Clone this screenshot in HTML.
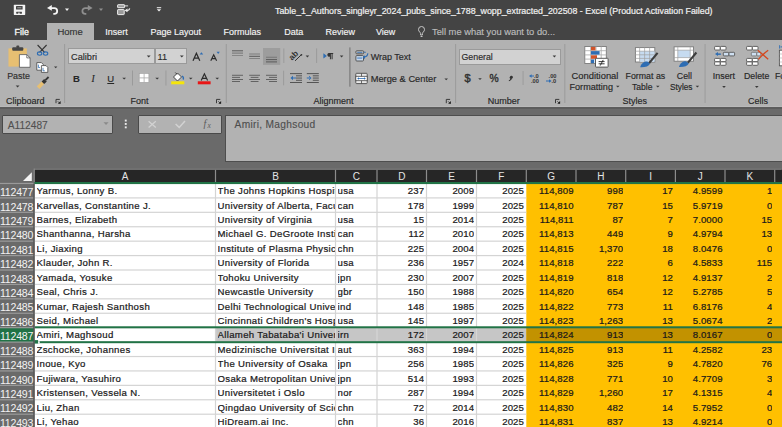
<!DOCTYPE html>
<html><head><meta charset="utf-8">
<style>
*{margin:0;padding:0;box-sizing:border-box}
html,body{width:782px;height:427px;overflow:hidden;background:#6a6a6a;font-family:"Liberation Sans",sans-serif}
.c{position:absolute;height:14.42px;line-height:14.42px;font-size:9.6px;letter-spacing:0.34px;color:#1a1a1a;-webkit-text-stroke:0.22px #1a1a1a;white-space:nowrap;overflow:hidden}
.r{text-align:right;letter-spacing:0.08px}
.rh{position:absolute;left:0;width:34.0px;height:14.42px;line-height:14.42px;font-size:10.6px;letter-spacing:-0.25px;color:#f2f2f2;text-align:right;padding-right:1.2px;white-space:nowrap;overflow:hidden}
.ch{position:absolute;height:12.300000000000011px;line-height:14.700000000000012px;font-size:10px;color:#e4e4e4;text-align:center}
.t{position:absolute;white-space:nowrap;-webkit-text-stroke-width:0.15px}
</style></head><body>
<!-- title + tabs -->
<div style="position:absolute;left:0;top:0;width:782px;height:40px;background:#444"></div>
<div class="t" style="left:275px;top:4.6px;font-size:8.85px;line-height:12px;color:#f0f0f0;-webkit-text-stroke:0.2px #f0f0f0">Table_1_Authors_singleyr_2024_pubs_since_1788_wopp_extracted_202508 - Excel (Product Activation Failed)</div>
<!-- QAT icons -->
<svg style="position:absolute;left:0;top:0" width="170" height="22">
 <rect x="13.8" y="4.8" width="11.4" height="10.1" rx="0.6" fill="#f4f4f4"/>
 <rect x="16" y="6.1" width="6.6" height="3.3" rx="0.5" fill="#454545"/>
 <rect x="17.3" y="7.2" width="4" height="1.1" fill="#9a9a9a"/>
 <rect x="16.2" y="11.8" width="5.8" height="1.9" rx="0.4" fill="#454545"/>
 <rect x="18.2" y="12.6" width="1.5" height="1.3" fill="#f4f4f4"/>
 <polygon points="47,7.9 51.8,5 51.8,10.8" fill="#f4f4f4"/>
 <path d="M50.5 8.1 H54.3 A2.9 2.9 0 0 1 57.2 11 A2.9 2.9 0 0 1 54.3 13.9 H53.3" fill="none" stroke="#f4f4f4" stroke-width="1.8"/>
 <polygon points="65,8.6 69,8.6 67,11" fill="#f4f4f4"/>
 <polygon points="92.6,7.9 87.8,5 87.8,10.8" fill="#8f8f8f"/>
 <path d="M89.1 8.1 H85.3 A2.9 2.9 0 0 0 82.4 11 A2.9 2.9 0 0 0 85.3 13.9 H86.3" fill="none" stroke="#8f8f8f" stroke-width="1.8"/>
 <polygon points="99,8.6 103,8.6 101,11" fill="#8f8f8f"/>
 <rect x="117.6" y="4.7" width="7" height="3" rx="0.5" fill="#9a9a9a" stroke="#eeeeee" stroke-width="1"/>
 <path d="M124.6 5.9 h3.5" stroke="#e0e0e0" stroke-width="1"/>
 <rect x="117.6" y="9.6" width="6.6" height="5" rx="0.5" fill="#9a9a9a" stroke="#eeeeee" stroke-width="1"/>
 <polygon points="124.6,10.5 127.5,8.6 127.5,12.2" fill="#f4f4f4"/>
 <path d="M126.5 10.6 c1.6 0 2.8 -0.8 3.2 -2.3" fill="none" stroke="#e8e8e8" stroke-width="1.2"/>
 <rect x="156.8" y="7.2" width="4.4" height="1" fill="#f0f0f0"/>
 <polygon points="156.8,9.2 161.2,9.2 159,11.6" fill="#f0f0f0"/>
</svg>
<!-- tabs -->
<div style="position:absolute;left:47.2px;top:23px;width:46.8px;height:17px;background:#b2b2b2"></div>
<div class="t" style="left:14.6px;top:26px;font-size:8.8px;line-height:12px;color:#f4f4f4;-webkit-text-stroke:0.35px #f4f4f4">File</div>
<div class="t" style="left:57.4px;top:26px;font-size:9.5px;line-height:12px;color:#333">Home</div>
<div class="t" style="left:105.2px;top:26px;font-size:9px;line-height:12px;color:#f4f4f4">Insert</div>
<div class="t" style="left:150.5px;top:26px;font-size:9px;line-height:12px;color:#f4f4f4">Page Layout</div>
<div class="t" style="left:223.6px;top:26px;font-size:9px;line-height:12px;color:#f4f4f4">Formulas</div>
<div class="t" style="left:284.3px;top:26px;font-size:9px;line-height:12px;color:#f4f4f4">Data</div>
<div class="t" style="left:325.5px;top:26px;font-size:9px;line-height:12px;color:#f4f4f4">Review</div>
<div class="t" style="left:376px;top:26px;font-size:9px;line-height:12px;color:#f4f4f4">View</div>
<svg style="position:absolute;left:416px;top:25px" width="12" height="14"><g fill="none" stroke="#c8c8c8" stroke-width="1"><path d="M4.6 10 v-1.5 c0 -1 -2.1 -2 -2.1 -4 a3 3 0 0 1 6 0 c0 2 -2.1 3 -2.1 4 V10 z"/><path d="M4.6 11.5 h1.9"/></g></svg>
<div class="t" style="left:432px;top:26px;font-size:9.35px;line-height:12px;color:#bdbdbd">Tell me what you want to do...</div>

<!-- ribbon body -->
<div style="position:absolute;left:0;top:40px;width:782px;height:66px;background:#b2b2b2"></div>
<div style="position:absolute;left:0;top:106px;width:782px;height:1px;background:#b9b9b9"></div>
<div style="position:absolute;left:0;top:107px;width:782px;height:2px;background:#5c5c5c"></div>
<!-- ribbon texts -->
<div class="t" style="left:7.2px;top:70px;font-size:8.9px;line-height:12px;color:#2e2e2e">Paste</div>
<div class="t" style="left:5.9px;top:94.6px;font-size:9px;line-height:12px;color:#262626">Clipboard</div>
<div class="t" style="left:130.5px;top:94.6px;font-size:9px;line-height:12px;color:#262626">Font</div>
<div class="t" style="left:313.6px;top:94.6px;font-size:9px;line-height:12px;color:#262626">Alignment</div>
<div class="t" style="left:487.7px;top:94.6px;font-size:9px;line-height:12px;color:#262626">Number</div>
<div class="t" style="left:622.5px;top:94.6px;font-size:9px;line-height:12px;color:#262626">Styles</div>
<div class="t" style="left:748px;top:94.6px;font-size:9px;line-height:12px;color:#262626">Cells</div>
<!-- font boxes -->
<div style="position:absolute;left:68.3px;top:48.3px;width:86.3px;height:16.2px;background:#d2d2d2;border:1px solid #9a9a9a"></div>
<div style="position:absolute;left:154.6px;top:48.3px;width:32.7px;height:16.2px;background:#d2d2d2;border:1px solid #9a9a9a"></div>
<div class="t" style="left:71px;top:50.5px;font-size:9.2px;line-height:12px;color:#2a2a2a">Calibri</div>
<div class="t" style="left:157.5px;top:50.5px;font-size:9.2px;line-height:12px;color:#2a2a2a">11</div>
<div class="t" style="left:73px;top:72.5px;font-size:9.5px;line-height:12px;color:#262626;font-weight:bold">B</div>
<div class="t" style="left:91.5px;top:72.5px;font-size:9.5px;line-height:12px;color:#262626;font-style:italic;font-family:'Liberation Serif',serif">I</div>
<div class="t" style="left:107.3px;top:72.5px;font-size:9.5px;line-height:12px;color:#262626;text-decoration:underline">U</div>
<!-- alignment texts -->
<div class="t" style="left:370.7px;top:50.5px;font-size:9px;line-height:12px;color:#262626">Wrap Text</div>
<div class="t" style="left:370.7px;top:73.3px;font-size:9.3px;line-height:12px;color:#262626">Merge &amp; Center</div>
<!-- number -->
<div style="position:absolute;left:459px;top:48.5px;width:101.7px;height:16.1px;background:#d2d2d2;border:1px solid #9a9a9a"></div>
<div class="t" style="left:461.5px;top:50.5px;font-size:8.8px;line-height:12px;color:#2a2a2a">General</div>
<div class="t" style="left:464.6px;top:72.2px;font-size:11px;line-height:13px;color:#333;-webkit-text-stroke:0.45px #333">$</div>
<div class="t" style="left:489.5px;top:73.3px;font-size:10.3px;line-height:12px;color:#333;-webkit-text-stroke:0.4px #333">%</div>

<!-- styles -->
<div class="t" style="left:571.5px;top:69.8px;font-size:9.4px;line-height:12px;color:#262626">Conditional</div>
<div class="t" style="left:569.5px;top:80.5px;font-size:9.1px;line-height:12px;color:#262626">Formatting</div>
<div class="t" style="left:625.6px;top:69.8px;font-size:8.8px;line-height:12px;color:#262626">Format as</div>
<div class="t" style="left:632px;top:80.5px;font-size:8.6px;line-height:12px;color:#262626">Table</div>
<div class="t" style="left:676.8px;top:69.8px;font-size:8.8px;line-height:12px;color:#262626">Cell</div>
<div class="t" style="left:669.9px;top:80.5px;font-size:8.3px;line-height:12px;color:#262626">Styles</div>
<div class="t" style="left:712.8px;top:69.8px;font-size:8.9px;line-height:12px;color:#262626">Insert</div>
<div class="t" style="left:744px;top:69.8px;font-size:8.8px;line-height:12px;color:#262626">Delete</div>
<div class="t" style="left:775px;top:69.8px;font-size:8.8px;line-height:12px;color:#262626">Format</div>
<!-- ribbon icons svg -->
<svg style="position:absolute;left:0;top:0" width="782" height="110">
 <!-- separators -->
 <g fill="#989898">
  <rect x="64.2" y="44" width="0.9" height="59"/>
  <rect x="225.8" y="44" width="0.9" height="59"/>
  <rect x="455.2" y="44" width="0.9" height="59"/>
  <rect x="564.4" y="44" width="0.9" height="59"/>
  <rect x="704.6" y="44" width="0.9" height="59"/>
  <rect x="132" y="70.5" width="0.9" height="15"/>
  <rect x="165.5" y="70.5" width="0.9" height="15"/>
  <rect x="283.4" y="48.4" width="0.9" height="14.6"/>
  <rect x="316.2" y="48.4" width="0.9" height="14.6"/>
  <rect x="283.2" y="70.7" width="0.9" height="14.6"/>
  <rect x="522.6" y="71" width="0.9" height="14"/>
 </g>
 <rect x="349.3" y="47.4" width="1.2" height="39.3" fill="#7a7a7a"/>
 <!-- dropdown arrows -->
 <g fill="#3a3a3a">
  <polygon points="15.7,85.6 19.5,85.6 17.6,87.6"/>
  <polygon points="54,66.4 57.4,66.4 55.7,68.3"/>
  <polygon points="146.8,55.6 150.6,55.6 148.7,57.6"/>
  <polygon points="179.9,55.6 183.7,55.6 181.8,57.6"/>
  <polygon points="122.3,77.7 126,77.7 124.15,79.6"/>
  <polygon points="155.3,77.7 159,77.7 157.15,79.6"/>
  <polygon points="188.9,77.7 192.6,77.7 190.75,79.6"/>
  <polygon points="215.4,77.7 219.1,77.7 217.25,79.6"/>
  <polygon points="305.6,55.6 309.2,55.6 307.4,57.5"/>
  <polygon points="339.8,55.6 343.4,55.6 341.6,57.5"/>
  <polygon points="444.4,78.4 448,78.4 446.2,80.3"/>
  <polygon points="552.6,55.6 556.2,55.6 554.4,57.5"/>
  <polygon points="478.2,78.2 481.8,78.2 480,80.1"/>
  <polygon points="616,85.7 619.6,85.7 617.8,87.6"/>
  <polygon points="656,85.7 659.6,85.7 657.8,87.6"/>
  <polygon points="695.6,85.7 699.2,85.7 697.4,87.6"/>
  <polygon points="722.2,86 725.8,86 724,87.9"/>
  <polygon points="755,86 758.6,86 756.8,87.9"/>
 </g>
 <!-- launchers -->
 <path d="M56.0 103.2 v-3.8 h3.8" fill="none" stroke="#3a3a3a" stroke-width="1"/><path d="M57.8 101.3 l2.2 2.2" stroke="#3a3a3a" stroke-width="0.8"/><polygon points="60.6,101.0 60.6,103.8 57.8,103.8" fill="#1e1e1e"/>
 <path d="M216.5 103.2 v-3.8 h3.8" fill="none" stroke="#3a3a3a" stroke-width="1"/><path d="M218.3 101.3 l2.2 2.2" stroke="#3a3a3a" stroke-width="0.8"/><polygon points="221.1,101.0 221.1,103.8 218.3,103.8" fill="#1e1e1e"/>
 <path d="M446.3 103.2 v-3.8 h3.8" fill="none" stroke="#3a3a3a" stroke-width="1"/><path d="M448.1 101.3 l2.2 2.2" stroke="#3a3a3a" stroke-width="0.8"/><polygon points="450.90000000000003,101.0 450.90000000000003,103.8 448.1,103.8" fill="#1e1e1e"/>
 <path d="M555.5 103.2 v-3.8 h3.8" fill="none" stroke="#3a3a3a" stroke-width="1"/><path d="M557.3 101.3 l2.2 2.2" stroke="#3a3a3a" stroke-width="0.8"/><polygon points="560.1,101.0 560.1,103.8 557.3,103.8" fill="#1e1e1e"/>
 <!-- paste -->
 <rect x="8.45" y="48.4" width="18.4" height="18.2" fill="#e7bf72"/>
 <rect x="12.2" y="47.2" width="11.1" height="3.6" rx="1" fill="#454545"/>
 <rect x="16.3" y="45.6" width="3" height="2.5" rx="1" fill="#454545"/>
 <path d="M19.4 54.6 h7.4 l3.3 3.3 v9.4 h-10.7 z" fill="#fff" stroke="#555" stroke-width="0.8"/>
 <path d="M26.8 54.6 v3.3 h3.3" fill="none" stroke="#555" stroke-width="0.8"/>
 <!-- scissors -->
 <path d="M37.6 45 L44.6 52.4 M46.6 45 L39.6 52.4" stroke="#333" stroke-width="1.1" fill="none"/>
 <ellipse cx="39.6" cy="53.6" rx="2.2" ry="1.7" fill="none" stroke="#2e6db3" stroke-width="1.1"/>
 <ellipse cx="45.6" cy="53.6" rx="2.2" ry="1.7" fill="none" stroke="#2e6db3" stroke-width="1.1"/>
 <!-- copy -->
 <path d="M36.8 62.6 h4.6 l1.8 1.8 v5.8 h-6.4 z" fill="#fff" stroke="#444" stroke-width="0.8"/>
 <path d="M41.4 65.6 h4.6 l1.8 1.8 v5 h-6.4 z" fill="#fff" stroke="#444" stroke-width="0.8"/>
 <path d="M38.4 64.6 v3 h1.6" stroke="#2e6db3" stroke-width="0.8" fill="none"/>
 <path d="M43 67.8 v3 h1.8" stroke="#2e6db3" stroke-width="0.8" fill="none"/>
 <!-- format painter -->
 <polygon points="36.8,86.3 41.6,81.5 44.2,84.1 39.4,88.9" fill="#e7bf72"/>
 <polygon points="41.6,81.5 44.2,78.9 46.8,81.5 44.2,84.1" fill="#333"/>
 <path d="M45.4 80.2 L48.6 77" stroke="#333" stroke-width="1.8"/>
 <!-- A grow/shrink -->
 <path d="M193 60.7 L196.4 53.2 L199.8 60.7 M194.3 58.1 H198.5" fill="none" stroke="#2b2b2b" stroke-width="1.25"/>
 <polygon points="199.6,54.6 203.2,54.6 201.4,52.2" fill="#2e6db3"/>
 <path d="M210.8 60.7 L213.7 54.8 L216.6 60.7 M211.9 58.6 H215.5" fill="none" stroke="#2b2b2b" stroke-width="1.15"/>
 <polygon points="216.6,51.8 219.8,51.8 218.2,54" fill="#2e6db3"/>
 <path d="M201.2 80.5 L204.4 73.8 L207.6 80.5 M202.4 78.3 H206.4" fill="none" stroke="#2b2b2b" stroke-width="1.2"/>
 <!-- borders -->
 <rect x="139.2" y="73.4" width="9.7" height="9" fill="#fff" stroke="#9a9a9a" stroke-width="0.6"/>
 <rect x="143.7" y="73.4" width="0.8" height="9" fill="#aaa"/>
 <rect x="139.2" y="77.5" width="9.7" height="0.8" fill="#aaa"/>
 <!-- fill color -->
 <path d="M173.5 77 l4 -4 l4 4 l-4 4 z" fill="#fff" stroke="#333" stroke-width="0.9"/>
 <path d="M175.3 72.5 l1.8 1.8" stroke="#333" stroke-width="0.9"/>
 <path d="M182 76.2 c1.5 0.6 1.8 2.2 1 3.3" fill="none" stroke="#2e6db3" stroke-width="1.4"/>
 <rect x="171.2" y="81.3" width="13.1" height="3" fill="#f5e50a"/>
 <rect x="197.8" y="81.3" width="12.8" height="3" fill="#e81515"/>
 <!-- align top/mid/bottom -->
 <rect x="263" y="48" width="17.2" height="16.9" fill="#9d9d9d"/>
 <g fill="#5a5a5a">
  <rect x="232" y="50.3" width="11" height="1"/><rect x="232" y="52.6" width="11" height="1" opacity="0.7"/><rect x="232" y="55" width="11" height="0.9" opacity="0.55"/>
  <rect x="249.2" y="53.5" width="10.8" height="1" opacity="0.6"/><rect x="249.2" y="55.8" width="10.8" height="1"/><rect x="249.2" y="58" width="10.8" height="0.9" opacity="0.6"/>
  <rect x="266" y="56.8" width="11" height="0.9" opacity="0.6"/><rect x="266" y="59.1" width="11" height="1"/><rect x="266" y="61.4" width="11" height="1"/>
 </g>
 <!-- orientation -->
 <text x="288.6" y="58.6" font-size="8.2" font-weight="bold" font-family="Liberation Sans" fill="#333" transform="rotate(-45 293 55.5)" style="-webkit-text-stroke:0.2px #333">ab</text>
 <path d="M295 60.9 l6.2 -6" stroke="#333" stroke-width="1"/>
 <circle cx="301.4" cy="54.8" r="0.9" fill="#333"/>
 <!-- rtl -->
 <polygon points="323.4,53.3 323.4,58.6 326.9,55.95" fill="#2e6db3"/>
 <path d="M328.5 53.1 h4.7 v0.9 h-0.6 v5.2 h-1 v-5.2 h-0.7 v5.2 h-1 v-2.6 a1.8 1.8 0 0 1 -1.4 -3.5 z" fill="#333"/>
 <!-- left/center/right -->
 <g fill="#5a5a5a">
  <rect x="232" y="74.8" width="11" height="0.9"/><rect x="232" y="76.9" width="8" height="0.9"/><rect x="232" y="79" width="11" height="0.9"/><rect x="232" y="81.1" width="8" height="0.9"/>
  <rect x="249.2" y="74.8" width="10.8" height="0.9"/><rect x="250.7" y="76.9" width="7.8" height="0.9"/><rect x="249.2" y="79" width="10.8" height="0.9"/><rect x="250.7" y="81.1" width="7.8" height="0.9"/>
  <rect x="266" y="74.8" width="11" height="0.9"/><rect x="269" y="76.9" width="8" height="0.9"/><rect x="266" y="79" width="11" height="0.9"/><rect x="269" y="81.1" width="8" height="0.9"/>
 </g>
 <!-- indents -->
 <g fill="#4a4a4a">
  <rect x="290" y="73.2" width="12" height="0.9"/><rect x="296" y="75.4" width="6" height="0.9"/><rect x="296" y="77.6" width="6" height="0.9"/><rect x="296" y="79.8" width="6" height="0.9"/><rect x="290" y="82" width="12" height="0.9"/>
  <rect x="306.8" y="73.2" width="12" height="0.9"/><rect x="312.8" y="75.4" width="6" height="0.9"/><rect x="312.8" y="77.6" width="6" height="0.9"/><rect x="312.8" y="79.8" width="6" height="0.9"/><rect x="306.8" y="82" width="12" height="0.9"/>
 </g>
 <path d="M290.5 78 l2.5 -2.2 v4.4 z M292.5 77.5 h3.5 v1 h-3.5z" fill="#2e6db3"/>
 <path d="M311.5 78 l-2.5 -2.2 v4.4 z M306.8 77.5 h3 v1 h-3z" fill="#2e6db3"/>
 <!-- wrap text icon -->
 <rect x="355.9" y="50.8" width="7.8" height="3" rx="0.9" fill="#c8c8c8" stroke="#4a4a4a" stroke-width="0.9"/>
 <rect x="357.2" y="51.9" width="5.2" height="0.8" fill="#2e6db3"/>
 <path d="M363.7 52.3 h2.2" stroke="#2e6db3" stroke-width="0.8"/>
 <rect x="355.9" y="55.6" width="7.6" height="5.4" rx="0.9" fill="#c8d8ea" stroke="#4a4a4a" stroke-width="0.9"/>
 <rect x="357.2" y="57.6" width="5" height="0.9" fill="#2e6db3"/>
 <path d="M367.8 53.3 c0 2.4 -1.6 3.7 -4.3 3.9" fill="none" stroke="#2e6db3" stroke-width="1.1"/>
 <polygon points="362.6,57.2 365,55.3 365,59" fill="#2e6db3"/>
 <!-- merge icon -->
 <rect x="355.8" y="73.3" width="11.4" height="10.3" rx="0.8" fill="#e8e8e8" stroke="#4a4a4a" stroke-width="0.9"/>
 <rect x="355.8" y="76.3" width="11.4" height="4.4" fill="#fff" stroke="#4a4a4a" stroke-width="0.8"/>
 <rect x="361.1" y="73.3" width="0.8" height="3" fill="#4a4a4a"/><rect x="361.1" y="80.7" width="0.8" height="2.9" fill="#4a4a4a"/>
 <path d="M357.8 78.5 h7.4" stroke="#2e6db3" stroke-width="0.8" fill="none"/>
 <polygon points="357.3,78.5 359,77.3 359,79.7" fill="#2e6db3"/><polygon points="365.7,78.5 364,77.3 364,79.7" fill="#2e6db3"/>
 <path d="M510.1 76.5 a1.5 1.5 0 1 1 1.8 2.1 c-0.3 1.3 -1.3 2.1 -2.9 2.6 l-0.3 -0.7 c1 -0.4 1.5 -1 1.6 -1.7 a1.5 1.5 0 0 1 -0.2 -2.3 z" fill="#333"/>
 <!-- decimal icons -->
 <g font-family="Liberation Sans" font-size="5.7" font-weight="bold" fill="#333">
 <text x="534" y="78">.0</text>
 <text x="531" y="82.8">.00</text>
 <text x="548.6" y="78">.00</text>
 <text x="551.4" y="82.8">.0</text>
 </g>
 <polygon points="529,76 531.6,74.3 531.6,77.7" fill="#2e6db3"/><rect x="531" y="75.5" width="3" height="1" fill="#2e6db3"/>
 <polygon points="551.6,81 549,79.3 549,82.7" fill="#2e6db3"/><rect x="546" y="80.5" width="3.2" height="1" fill="#2e6db3"/>
 <!-- conditional formatting icon -->
 <g>
  <rect x="584.8" y="46.5" width="21.5" height="17" fill="#fff" stroke="#7a7a7a" stroke-width="0.9"/>
  <path d="M584.8 50.7 h21.5 M584.8 54.9 h21.5 M584.8 59.1 h21.5 M590.6 46.5 v17 M596 46.5 v17 M601.2 46.5 v17" stroke="#a8a8a8" stroke-width="0.8"/>
  <rect x="591" y="46.9" width="4.5" height="3.5" fill="#d2542a"/>
  <rect x="591" y="51.1" width="8.6" height="3.5" fill="#2e6db3"/>
  <rect x="591" y="55.3" width="6" height="3.5" fill="#d2542a"/>
  <rect x="591" y="59.5" width="3.2" height="3.6" fill="#2e6db3"/>
  <rect x="595.5" y="58.3" width="12.6" height="8.8" rx="0.6" fill="#fff" stroke="#4a4a4a" stroke-width="0.9"/>
  <path d="M598.6 61.6 h6 M598.6 63.8 h6 M603.2 59.9 l-3 5.7" stroke="#222" stroke-width="0.9"/>
 </g>
 <!-- format as table -->
 <g>
  <rect x="635.4" y="47.6" width="19.4" height="14.4" fill="#fff" stroke="#7a7a7a" stroke-width="0.9"/>
  <rect x="639.6" y="51.2" width="15" height="10.6" fill="#c6dbf0"/>
  <path d="M635.4 51.2 h19.4 M635.4 54.8 h19.4 M635.4 58.4 h19.4 M639.6 47.6 v14.4 M644.6 47.6 v14.4 M649.6 47.6 v14.4" stroke="#a0a0a0" stroke-width="0.7"/>
  <path d="M648.2 62.6 l8.6 -10.4 l1.6 1.4 l-8.6 10.4 z" fill="#3d3d3d"/>
  <path d="M640.2 67.2 c0.8 -3.4 3.6 -6 7.2 -5.6 l2.6 2.2 c-1.2 2.8 -5 3.6 -9.8 3.4 z" fill="#2e6db3"/>
 </g>
 <!-- cell styles -->
 <g>
  <rect x="674.1" y="46.8" width="19.4" height="14.4" fill="#fff" stroke="#7a7a7a" stroke-width="0.9"/>
  <rect x="677.8" y="50.2" width="12.4" height="7.4" fill="#c6dbf0"/>
  <path d="M674.1 50.2 h19.4 M674.1 57.6 h19.4 M677.8 46.8 v14.4 M690.2 46.8 v14.4" stroke="#a0a0a0" stroke-width="0.7"/>
  <path d="M687 62.2 l8.6 -10.4 l1.6 1.4 l-8.6 10.4 z" fill="#3d3d3d"/>
  <path d="M679 67 c0.8 -3.4 3.6 -6 7.2 -5.6 l2.6 2.2 c-1.2 2.8 -5 3.6 -9.8 3.4 z" fill="#2e6db3"/>
 </g>
 <!-- insert icon -->
 <g fill="#fff" stroke="#555" stroke-width="0.9">
  <rect x="714.6" y="46.4" width="5.6" height="3.6" rx="0.8"/><rect x="720.4" y="46.4" width="5.6" height="3.6" rx="0.8"/>
  <rect x="714.6" y="58.4" width="5.6" height="3.4" rx="0.8"/><rect x="720.4" y="58.4" width="5.6" height="3.4" rx="0.8"/>
  <rect x="714.6" y="61.9" width="5.6" height="3.4" rx="0.8"/><rect x="720.4" y="61.9" width="5.6" height="3.4" rx="0.8"/>
  <rect x="723.3" y="52.3" width="5.6" height="3.6" rx="0.8" fill="#cfe0f2"/><rect x="729" y="52.3" width="5.6" height="3.6" rx="0.8" fill="#cfe0f2"/>
 </g>
 <polygon points="715,54.1 718,52.1 718,56.1" fill="#2e6db3"/><rect x="717.6" y="53.4" width="3.2" height="1.5" fill="#2e6db3"/>
 <!-- delete icon -->
 <g fill="#fff" stroke="#555" stroke-width="0.9">
  <rect x="746.6" y="46.4" width="5.6" height="3.6" rx="0.8"/><rect x="752.4" y="46.4" width="5.6" height="3.6" rx="0.8"/>
  <rect x="746.6" y="58.4" width="5.6" height="3.4" rx="0.8"/><rect x="752.4" y="58.4" width="5.6" height="3.4" rx="0.8"/>
  <rect x="746.6" y="61.9" width="5.6" height="3.4" rx="0.8"/><rect x="752.4" y="61.9" width="5.6" height="3.4" rx="0.8"/>
  <rect x="751.3" y="52.3" width="5.4" height="3.6" rx="0.8" fill="#cfe0f2" stroke="#777"/><rect x="756.8" y="52.3" width="4" height="3.6" rx="0.8" fill="#cfe0f2" stroke="#777"/>
 </g>
 <path d="M757.8 50.2 l10.4 9 M768.2 50.2 c-3.5 2.5 -6.6 5.4 -9.8 9.2" stroke="#d4461e" stroke-width="1.3" fill="none"/>
 <!-- format icon partial -->
 <rect x="779.4" y="50.2" width="6" height="15.6" fill="#fff" stroke="#555" stroke-width="0.9"/>
 <path d="M779.4 54 h4 M779.4 58 h4 M779.4 62 h4" stroke="#aaa" stroke-width="0.6"/>
 <rect x="779.2" y="45.2" width="0.9" height="3.4" fill="#2e6db3"/><rect x="780.6" y="46.4" width="2" height="1" fill="#2e6db3"/>
</svg>

<!-- formula bar -->
<div style="position:absolute;left:2.3px;top:114.6px;width:111.2px;height:19px;background:#b2b2b2;border:1px solid #4a4a4a;border-radius:1px"></div>
<div class="t" style="left:7.7px;top:119.6px;font-size:10.2px;line-height:12px;color:#505050;-webkit-text-stroke:0.1px #505050">A112487</div>

<div style="position:absolute;left:137.6px;top:114.8px;width:84.8px;height:18.8px;background:#b2b2b2;border:1px solid #4a4a4a;border-radius:1px"></div>
<div style="position:absolute;left:225.1px;top:114.7px;width:560px;height:47.8px;background:#b2b2b2;border:1px solid #4e4e4e"></div>
<div class="t" style="left:234.6px;top:119.4px;font-size:10.2px;line-height:12px;letter-spacing:0.3px;color:#4e4e4e;-webkit-text-stroke:0.12px #4e4e4e">Amiri, Maghsoud</div>
<svg style="position:absolute;left:0;top:100px" width="240" height="70">
 <polygon points="103.5,22.3 108.6,22.3 106.05,25" fill="#8a8a8a"/>
 <rect x="124.8" y="19.6" width="1.9" height="1.9" fill="#eaeaea"/>
 <rect x="124.8" y="23" width="1.9" height="1.9" fill="#eaeaea"/>
 <rect x="124.8" y="26.4" width="1.9" height="1.9" fill="#eaeaea"/>
 <path d="M148.6 21.2 l7.2 6.2 M155.8 21.2 l-7.2 6.2" stroke="#d2d2d2" stroke-width="1.3"/>
 <path d="M175.6 24 l3.6 3.4 l5.8 -6.4" stroke="#d2d2d2" stroke-width="1.5" fill="none"/>
 <text x="203.6" y="127" transform="translate(0,-100)" font-size="10" font-family="Liberation Serif" font-style="italic" fill="#5a5a5a">f</text>
 <text x="207.6" y="127.6" transform="translate(0,-100)" font-size="7.5" font-family="Liberation Serif" font-style="italic" fill="#5a5a5a">x</text>
</svg>

<svg style="position:absolute;left:0;top:0" width="782" height="427"><rect x="34.5" y="183.48" width="747.5" height="243.52" fill="#fff"/><rect x="526.3" y="183.48" width="255.70000000000005" height="243.52" fill="#ffc000"/><rect x="34.5" y="197.29999999999998" width="491.79999999999995" height="1.2" fill="#d4d4d4"/><rect x="34.5" y="211.72" width="491.79999999999995" height="1.2" fill="#d4d4d4"/><rect x="34.5" y="226.14" width="491.79999999999995" height="1.2" fill="#d4d4d4"/><rect x="34.5" y="240.56" width="491.79999999999995" height="1.2" fill="#d4d4d4"/><rect x="34.5" y="254.98" width="491.79999999999995" height="1.2" fill="#d4d4d4"/><rect x="34.5" y="269.4" width="491.79999999999995" height="1.2" fill="#d4d4d4"/><rect x="34.5" y="283.81999999999994" width="491.79999999999995" height="1.2" fill="#d4d4d4"/><rect x="34.5" y="298.23999999999995" width="491.79999999999995" height="1.2" fill="#d4d4d4"/><rect x="34.5" y="312.65999999999997" width="491.79999999999995" height="1.2" fill="#d4d4d4"/><rect x="34.5" y="327.0799999999999" width="491.79999999999995" height="1.2" fill="#d4d4d4"/><rect x="34.5" y="341.5" width="491.79999999999995" height="1.2" fill="#d4d4d4"/><rect x="34.5" y="355.91999999999996" width="491.79999999999995" height="1.2" fill="#d4d4d4"/><rect x="34.5" y="370.34" width="491.79999999999995" height="1.2" fill="#d4d4d4"/><rect x="34.5" y="384.76" width="491.79999999999995" height="1.2" fill="#d4d4d4"/><rect x="34.5" y="399.17999999999995" width="491.79999999999995" height="1.2" fill="#d4d4d4"/><rect x="34.5" y="413.59999999999997" width="491.79999999999995" height="1.2" fill="#d4d4d4"/><rect x="34.5" y="428.02" width="491.79999999999995" height="1.2" fill="#d4d4d4"/><rect x="34.5" y="442.43999999999994" width="491.79999999999995" height="1.2" fill="#d4d4d4"/><rect x="214.9" y="183.48" width="1.2" height="243.52" fill="#d4d4d4"/><rect x="334.9" y="183.48" width="1.2" height="243.52" fill="#d4d4d4"/><rect x="376.4" y="183.48" width="1.2" height="243.52" fill="#d4d4d4"/><rect x="425.9" y="183.48" width="1.2" height="243.52" fill="#d4d4d4"/><rect x="475.9" y="183.48" width="1.2" height="243.52" fill="#d4d4d4"/><rect x="216.1" y="327.67999999999995" width="310.19999999999993" height="14.42" fill="#c6c6c6"/><rect x="526.3" y="327.67999999999995" width="255.70000000000005" height="14.42" fill="#c29200"/><rect x="334.9" y="327.67999999999995" width="1.2" height="14.42" fill="#d6d6d6"/><rect x="376.4" y="327.67999999999995" width="1.2" height="14.42" fill="#d6d6d6"/><rect x="425.9" y="327.67999999999995" width="1.2" height="14.42" fill="#d6d6d6"/><rect x="475.9" y="327.67999999999995" width="1.2" height="14.42" fill="#d6d6d6"/></svg>
<div class="c" style="left:36.5px;top:184.2px;width:178.5px">Yarmus, Lonny B.</div>
<div class="c" style="left:217.5px;top:184.2px;width:117.5px">The Johns Hopkins Hospital</div>
<div class="c" style="left:337.5px;top:184.2px;width:39.0px">usa</div>
<div class="c r" style="left:377.0px;top:184.2px;width:47.1px">237</div>
<div class="c r" style="left:426.5px;top:184.2px;width:47.6px">2009</div>
<div class="c r" style="left:476.5px;top:184.2px;width:47.399999999999956px">2025</div>
<div class="c r" style="left:526.3px;top:184.2px;width:47.30000000000005px">114,809</div>
<div class="c r" style="left:576.0px;top:184.2px;width:47.30000000000005px">998</div>
<div class="c r" style="left:625.7px;top:184.2px;width:47.29999999999993px">17</div>
<div class="c r" style="left:675.4px;top:184.2px;width:47.200000000000024px">4.9599</div>
<div class="c r" style="left:725.0px;top:184.2px;width:47.30000000000005px">1</div>
<div class="c" style="left:36.5px;top:198.61999999999998px;width:178.5px">Karvellas, Constantine J.</div>
<div class="c" style="left:217.5px;top:198.61999999999998px;width:117.5px">University of Alberta, Faculty</div>
<div class="c" style="left:337.5px;top:198.61999999999998px;width:39.0px">can</div>
<div class="c r" style="left:377.0px;top:198.61999999999998px;width:47.1px">178</div>
<div class="c r" style="left:426.5px;top:198.61999999999998px;width:47.6px">1999</div>
<div class="c r" style="left:476.5px;top:198.61999999999998px;width:47.399999999999956px">2025</div>
<div class="c r" style="left:526.3px;top:198.61999999999998px;width:47.30000000000005px">114,810</div>
<div class="c r" style="left:576.0px;top:198.61999999999998px;width:47.30000000000005px">787</div>
<div class="c r" style="left:625.7px;top:198.61999999999998px;width:47.29999999999993px">15</div>
<div class="c r" style="left:675.4px;top:198.61999999999998px;width:47.200000000000024px">5.9719</div>
<div class="c r" style="left:725.0px;top:198.61999999999998px;width:47.30000000000005px">0</div>
<div class="c" style="left:36.5px;top:213.04px;width:178.5px">Barnes, Elizabeth</div>
<div class="c" style="left:217.5px;top:213.04px;width:117.5px">University of Virginia</div>
<div class="c" style="left:337.5px;top:213.04px;width:39.0px">usa</div>
<div class="c r" style="left:377.0px;top:213.04px;width:47.1px">15</div>
<div class="c r" style="left:426.5px;top:213.04px;width:47.6px">2014</div>
<div class="c r" style="left:476.5px;top:213.04px;width:47.399999999999956px">2025</div>
<div class="c r" style="left:526.3px;top:213.04px;width:47.30000000000005px">114,811</div>
<div class="c r" style="left:576.0px;top:213.04px;width:47.30000000000005px">87</div>
<div class="c r" style="left:625.7px;top:213.04px;width:47.29999999999993px">7</div>
<div class="c r" style="left:675.4px;top:213.04px;width:47.200000000000024px">7.0000</div>
<div class="c r" style="left:725.0px;top:213.04px;width:47.30000000000005px">15</div>
<div class="c" style="left:36.5px;top:227.45999999999998px;width:178.5px">Shanthanna, Harsha</div>
<div class="c" style="left:217.5px;top:227.45999999999998px;width:117.5px">Michael G. DeGroote Institute</div>
<div class="c" style="left:337.5px;top:227.45999999999998px;width:39.0px">can</div>
<div class="c r" style="left:377.0px;top:227.45999999999998px;width:47.1px">112</div>
<div class="c r" style="left:426.5px;top:227.45999999999998px;width:47.6px">2010</div>
<div class="c r" style="left:476.5px;top:227.45999999999998px;width:47.399999999999956px">2025</div>
<div class="c r" style="left:526.3px;top:227.45999999999998px;width:47.30000000000005px">114,813</div>
<div class="c r" style="left:576.0px;top:227.45999999999998px;width:47.30000000000005px">449</div>
<div class="c r" style="left:625.7px;top:227.45999999999998px;width:47.29999999999993px">9</div>
<div class="c r" style="left:675.4px;top:227.45999999999998px;width:47.200000000000024px">4.9794</div>
<div class="c r" style="left:725.0px;top:227.45999999999998px;width:47.30000000000005px">13</div>
<div class="c" style="left:36.5px;top:241.88px;width:178.5px">Li, Jiaxing</div>
<div class="c" style="left:217.5px;top:241.88px;width:117.5px">Institute of Plasma Physics</div>
<div class="c" style="left:337.5px;top:241.88px;width:39.0px">chn</div>
<div class="c r" style="left:377.0px;top:241.88px;width:47.1px">225</div>
<div class="c r" style="left:426.5px;top:241.88px;width:47.6px">2004</div>
<div class="c r" style="left:476.5px;top:241.88px;width:47.399999999999956px">2025</div>
<div class="c r" style="left:526.3px;top:241.88px;width:47.30000000000005px">114,815</div>
<div class="c r" style="left:576.0px;top:241.88px;width:47.30000000000005px">1,370</div>
<div class="c r" style="left:625.7px;top:241.88px;width:47.29999999999993px">18</div>
<div class="c r" style="left:675.4px;top:241.88px;width:47.200000000000024px">8.0476</div>
<div class="c r" style="left:725.0px;top:241.88px;width:47.30000000000005px">0</div>
<div class="c" style="left:36.5px;top:256.29999999999995px;width:178.5px">Klauder, John R.</div>
<div class="c" style="left:217.5px;top:256.29999999999995px;width:117.5px">University of Florida</div>
<div class="c" style="left:337.5px;top:256.29999999999995px;width:39.0px">usa</div>
<div class="c r" style="left:377.0px;top:256.29999999999995px;width:47.1px">236</div>
<div class="c r" style="left:426.5px;top:256.29999999999995px;width:47.6px">1957</div>
<div class="c r" style="left:476.5px;top:256.29999999999995px;width:47.399999999999956px">2024</div>
<div class="c r" style="left:526.3px;top:256.29999999999995px;width:47.30000000000005px">114,818</div>
<div class="c r" style="left:576.0px;top:256.29999999999995px;width:47.30000000000005px">222</div>
<div class="c r" style="left:625.7px;top:256.29999999999995px;width:47.29999999999993px">6</div>
<div class="c r" style="left:675.4px;top:256.29999999999995px;width:47.200000000000024px">4.5833</div>
<div class="c r" style="left:725.0px;top:256.29999999999995px;width:47.30000000000005px">115</div>
<div class="c" style="left:36.5px;top:270.71999999999997px;width:178.5px">Yamada, Yosuke</div>
<div class="c" style="left:217.5px;top:270.71999999999997px;width:117.5px">Tohoku University</div>
<div class="c" style="left:337.5px;top:270.71999999999997px;width:39.0px">jpn</div>
<div class="c r" style="left:377.0px;top:270.71999999999997px;width:47.1px">230</div>
<div class="c r" style="left:426.5px;top:270.71999999999997px;width:47.6px">2007</div>
<div class="c r" style="left:476.5px;top:270.71999999999997px;width:47.399999999999956px">2025</div>
<div class="c r" style="left:526.3px;top:270.71999999999997px;width:47.30000000000005px">114,819</div>
<div class="c r" style="left:576.0px;top:270.71999999999997px;width:47.30000000000005px">818</div>
<div class="c r" style="left:625.7px;top:270.71999999999997px;width:47.29999999999993px">12</div>
<div class="c r" style="left:675.4px;top:270.71999999999997px;width:47.200000000000024px">4.9137</div>
<div class="c r" style="left:725.0px;top:270.71999999999997px;width:47.30000000000005px">2</div>
<div class="c" style="left:36.5px;top:285.14px;width:178.5px">Seal, Chris J.</div>
<div class="c" style="left:217.5px;top:285.14px;width:117.5px">Newcastle University</div>
<div class="c" style="left:337.5px;top:285.14px;width:39.0px">gbr</div>
<div class="c r" style="left:377.0px;top:285.14px;width:47.1px">150</div>
<div class="c r" style="left:426.5px;top:285.14px;width:47.6px">1988</div>
<div class="c r" style="left:476.5px;top:285.14px;width:47.399999999999956px">2025</div>
<div class="c r" style="left:526.3px;top:285.14px;width:47.30000000000005px">114,820</div>
<div class="c r" style="left:576.0px;top:285.14px;width:47.30000000000005px">654</div>
<div class="c r" style="left:625.7px;top:285.14px;width:47.29999999999993px">12</div>
<div class="c r" style="left:675.4px;top:285.14px;width:47.200000000000024px">5.2785</div>
<div class="c r" style="left:725.0px;top:285.14px;width:47.30000000000005px">5</div>
<div class="c" style="left:36.5px;top:299.56px;width:178.5px">Kumar, Rajesh Santhosh</div>
<div class="c" style="left:217.5px;top:299.56px;width:117.5px">Delhi Technological University</div>
<div class="c" style="left:337.5px;top:299.56px;width:39.0px">ind</div>
<div class="c r" style="left:377.0px;top:299.56px;width:47.1px">148</div>
<div class="c r" style="left:426.5px;top:299.56px;width:47.6px">1985</div>
<div class="c r" style="left:476.5px;top:299.56px;width:47.399999999999956px">2025</div>
<div class="c r" style="left:526.3px;top:299.56px;width:47.30000000000005px">114,822</div>
<div class="c r" style="left:576.0px;top:299.56px;width:47.30000000000005px">773</div>
<div class="c r" style="left:625.7px;top:299.56px;width:47.29999999999993px">11</div>
<div class="c r" style="left:675.4px;top:299.56px;width:47.200000000000024px">6.8176</div>
<div class="c r" style="left:725.0px;top:299.56px;width:47.30000000000005px">4</div>
<div class="c" style="left:36.5px;top:313.98px;width:178.5px">Seid, Michael</div>
<div class="c" style="left:217.5px;top:313.98px;width:117.5px">Cincinnati Children's Hospital</div>
<div class="c" style="left:337.5px;top:313.98px;width:39.0px">usa</div>
<div class="c r" style="left:377.0px;top:313.98px;width:47.1px">145</div>
<div class="c r" style="left:426.5px;top:313.98px;width:47.6px">1997</div>
<div class="c r" style="left:476.5px;top:313.98px;width:47.399999999999956px">2025</div>
<div class="c r" style="left:526.3px;top:313.98px;width:47.30000000000005px">114,823</div>
<div class="c r" style="left:576.0px;top:313.98px;width:47.30000000000005px">1,263</div>
<div class="c r" style="left:625.7px;top:313.98px;width:47.29999999999993px">13</div>
<div class="c r" style="left:675.4px;top:313.98px;width:47.200000000000024px">5.0674</div>
<div class="c r" style="left:725.0px;top:313.98px;width:47.30000000000005px">2</div>
<div class="c" style="left:36.5px;top:328.4px;width:178.5px">Amiri, Maghsoud</div>
<div class="c" style="left:217.5px;top:328.4px;width:117.5px">Allameh Tabataba'i University</div>
<div class="c" style="left:337.5px;top:328.4px;width:39.0px">irn</div>
<div class="c r" style="left:377.0px;top:328.4px;width:47.1px">172</div>
<div class="c r" style="left:426.5px;top:328.4px;width:47.6px">2007</div>
<div class="c r" style="left:476.5px;top:328.4px;width:47.399999999999956px">2025</div>
<div class="c r" style="left:526.3px;top:328.4px;width:47.30000000000005px">114,824</div>
<div class="c r" style="left:576.0px;top:328.4px;width:47.30000000000005px">913</div>
<div class="c r" style="left:625.7px;top:328.4px;width:47.29999999999993px">13</div>
<div class="c r" style="left:675.4px;top:328.4px;width:47.200000000000024px">8.0167</div>
<div class="c r" style="left:725.0px;top:328.4px;width:47.30000000000005px">0</div>
<div class="c" style="left:36.5px;top:342.82px;width:178.5px">Zschocke, Johannes</div>
<div class="c" style="left:217.5px;top:342.82px;width:117.5px">Medizinische Universitat Innsbruck</div>
<div class="c" style="left:337.5px;top:342.82px;width:39.0px">aut</div>
<div class="c r" style="left:377.0px;top:342.82px;width:47.1px">363</div>
<div class="c r" style="left:426.5px;top:342.82px;width:47.6px">1994</div>
<div class="c r" style="left:476.5px;top:342.82px;width:47.399999999999956px">2025</div>
<div class="c r" style="left:526.3px;top:342.82px;width:47.30000000000005px">114,825</div>
<div class="c r" style="left:576.0px;top:342.82px;width:47.30000000000005px">913</div>
<div class="c r" style="left:625.7px;top:342.82px;width:47.29999999999993px">11</div>
<div class="c r" style="left:675.4px;top:342.82px;width:47.200000000000024px">4.2582</div>
<div class="c r" style="left:725.0px;top:342.82px;width:47.30000000000005px">23</div>
<div class="c" style="left:36.5px;top:357.24px;width:178.5px">Inoue, Kyo</div>
<div class="c" style="left:217.5px;top:357.24px;width:117.5px">The University of Osaka</div>
<div class="c" style="left:337.5px;top:357.24px;width:39.0px">jpn</div>
<div class="c r" style="left:377.0px;top:357.24px;width:47.1px">256</div>
<div class="c r" style="left:426.5px;top:357.24px;width:47.6px">1985</div>
<div class="c r" style="left:476.5px;top:357.24px;width:47.399999999999956px">2025</div>
<div class="c r" style="left:526.3px;top:357.24px;width:47.30000000000005px">114,826</div>
<div class="c r" style="left:576.0px;top:357.24px;width:47.30000000000005px">325</div>
<div class="c r" style="left:625.7px;top:357.24px;width:47.29999999999993px">9</div>
<div class="c r" style="left:675.4px;top:357.24px;width:47.200000000000024px">4.7820</div>
<div class="c r" style="left:725.0px;top:357.24px;width:47.30000000000005px">76</div>
<div class="c" style="left:36.5px;top:371.65999999999997px;width:178.5px">Fujiwara, Yasuhiro</div>
<div class="c" style="left:217.5px;top:371.65999999999997px;width:117.5px">Osaka Metropolitan University</div>
<div class="c" style="left:337.5px;top:371.65999999999997px;width:39.0px">jpn</div>
<div class="c r" style="left:377.0px;top:371.65999999999997px;width:47.1px">514</div>
<div class="c r" style="left:426.5px;top:371.65999999999997px;width:47.6px">1993</div>
<div class="c r" style="left:476.5px;top:371.65999999999997px;width:47.399999999999956px">2025</div>
<div class="c r" style="left:526.3px;top:371.65999999999997px;width:47.30000000000005px">114,828</div>
<div class="c r" style="left:576.0px;top:371.65999999999997px;width:47.30000000000005px">771</div>
<div class="c r" style="left:625.7px;top:371.65999999999997px;width:47.29999999999993px">10</div>
<div class="c r" style="left:675.4px;top:371.65999999999997px;width:47.200000000000024px">4.7709</div>
<div class="c r" style="left:725.0px;top:371.65999999999997px;width:47.30000000000005px">3</div>
<div class="c" style="left:36.5px;top:386.08px;width:178.5px">Kristensen, Vessela N.</div>
<div class="c" style="left:217.5px;top:386.08px;width:117.5px">Universitetet i Oslo</div>
<div class="c" style="left:337.5px;top:386.08px;width:39.0px">nor</div>
<div class="c r" style="left:377.0px;top:386.08px;width:47.1px">287</div>
<div class="c r" style="left:426.5px;top:386.08px;width:47.6px">1994</div>
<div class="c r" style="left:476.5px;top:386.08px;width:47.399999999999956px">2025</div>
<div class="c r" style="left:526.3px;top:386.08px;width:47.30000000000005px">114,829</div>
<div class="c r" style="left:576.0px;top:386.08px;width:47.30000000000005px">1,260</div>
<div class="c r" style="left:625.7px;top:386.08px;width:47.29999999999993px">17</div>
<div class="c r" style="left:675.4px;top:386.08px;width:47.200000000000024px">4.1315</div>
<div class="c r" style="left:725.0px;top:386.08px;width:47.30000000000005px">4</div>
<div class="c" style="left:36.5px;top:400.5px;width:178.5px">Liu, Zhan</div>
<div class="c" style="left:217.5px;top:400.5px;width:117.5px">Qingdao University of Science</div>
<div class="c" style="left:337.5px;top:400.5px;width:39.0px">chn</div>
<div class="c r" style="left:377.0px;top:400.5px;width:47.1px">72</div>
<div class="c r" style="left:426.5px;top:400.5px;width:47.6px">2014</div>
<div class="c r" style="left:476.5px;top:400.5px;width:47.399999999999956px">2025</div>
<div class="c r" style="left:526.3px;top:400.5px;width:47.30000000000005px">114,830</div>
<div class="c r" style="left:576.0px;top:400.5px;width:47.30000000000005px">482</div>
<div class="c r" style="left:625.7px;top:400.5px;width:47.29999999999993px">14</div>
<div class="c r" style="left:675.4px;top:400.5px;width:47.200000000000024px">5.7952</div>
<div class="c r" style="left:725.0px;top:400.5px;width:47.30000000000005px">0</div>
<div class="c" style="left:36.5px;top:414.91999999999996px;width:178.5px">Li, Yehao</div>
<div class="c" style="left:217.5px;top:414.91999999999996px;width:117.5px">HiDream.ai Inc.</div>
<div class="c" style="left:337.5px;top:414.91999999999996px;width:39.0px">chn</div>
<div class="c r" style="left:377.0px;top:414.91999999999996px;width:47.1px">36</div>
<div class="c r" style="left:426.5px;top:414.91999999999996px;width:47.6px">2016</div>
<div class="c r" style="left:476.5px;top:414.91999999999996px;width:47.399999999999956px">2025</div>
<div class="c r" style="left:526.3px;top:414.91999999999996px;width:47.30000000000005px">114,831</div>
<div class="c r" style="left:576.0px;top:414.91999999999996px;width:47.30000000000005px">837</div>
<div class="c r" style="left:625.7px;top:414.91999999999996px;width:47.29999999999993px">13</div>
<div class="c r" style="left:675.4px;top:414.91999999999996px;width:47.200000000000024px">4.9214</div>
<div class="c r" style="left:725.0px;top:414.91999999999996px;width:47.30000000000005px">0</div>
<svg style="position:absolute;left:0;top:0" width="782" height="427"><rect x="34.5" y="326.28" width="747.5" height="2" fill="#217346"/><rect x="34.5" y="341.2" width="747.5" height="2" fill="#217346"/><rect x="34.1" y="340.09999999999997" width="4" height="3.4" fill="#217346"/><rect x="38.1" y="341.2" width="1.6" height="2" fill="#fff"/><rect x="0" y="183.48" width="34.5" height="243.52" fill="#6a6a6a"/><rect x="0" y="327.67999999999995" width="33.9" height="14.42" fill="#217346"/><rect x="0" y="182.88" width="33.9" height="1.2" fill="#9a9a9a"/><rect x="0" y="197.29999999999998" width="33.9" height="1.2" fill="#9a9a9a"/><rect x="0" y="211.72" width="33.9" height="1.2" fill="#9a9a9a"/><rect x="0" y="226.14" width="33.9" height="1.2" fill="#9a9a9a"/><rect x="0" y="240.56" width="33.9" height="1.2" fill="#9a9a9a"/><rect x="0" y="254.98" width="33.9" height="1.2" fill="#9a9a9a"/><rect x="0" y="269.4" width="33.9" height="1.2" fill="#9a9a9a"/><rect x="0" y="283.81999999999994" width="33.9" height="1.2" fill="#9a9a9a"/><rect x="0" y="298.23999999999995" width="33.9" height="1.2" fill="#9a9a9a"/><rect x="0" y="312.65999999999997" width="33.9" height="1.2" fill="#9a9a9a"/><rect x="0" y="327.0799999999999" width="33.9" height="1.2" fill="#9a9a9a"/><rect x="0" y="341.5" width="33.9" height="1.2" fill="#9a9a9a"/><rect x="0" y="355.91999999999996" width="33.9" height="1.2" fill="#9a9a9a"/><rect x="0" y="370.34" width="33.9" height="1.2" fill="#9a9a9a"/><rect x="0" y="384.76" width="33.9" height="1.2" fill="#9a9a9a"/><rect x="0" y="399.17999999999995" width="33.9" height="1.2" fill="#9a9a9a"/><rect x="0" y="413.59999999999997" width="33.9" height="1.2" fill="#9a9a9a"/><rect x="0" y="428.02" width="33.9" height="1.2" fill="#9a9a9a"/><rect x="33.3" y="183.48" width="1.2" height="243.52" fill="#555555"/><rect x="34.5" y="169.7" width="747.5" height="12.300000000000011" fill="#262626"/><rect x="214.9" y="169.7" width="1.2" height="12.300000000000011" fill="#8c8c8c"/><rect x="334.9" y="169.7" width="1.2" height="12.300000000000011" fill="#8c8c8c"/><rect x="376.4" y="169.7" width="1.2" height="12.300000000000011" fill="#8c8c8c"/><rect x="425.9" y="169.7" width="1.2" height="12.300000000000011" fill="#8c8c8c"/><rect x="475.9" y="169.7" width="1.2" height="12.300000000000011" fill="#8c8c8c"/><rect x="525.6999999999999" y="169.7" width="1.2" height="12.300000000000011" fill="#8c8c8c"/><rect x="575.4" y="169.7" width="1.2" height="12.300000000000011" fill="#8c8c8c"/><rect x="625.1" y="169.7" width="1.2" height="12.300000000000011" fill="#8c8c8c"/><rect x="674.8" y="169.7" width="1.2" height="12.300000000000011" fill="#8c8c8c"/><rect x="724.4" y="169.7" width="1.2" height="12.300000000000011" fill="#8c8c8c"/><rect x="774.1" y="169.7" width="1.2" height="12.300000000000011" fill="#8c8c8c"/><rect x="34.5" y="182.0" width="747.5" height="2.07999999999999" fill="#217346"/><polygon points="31.8,172.2 31.8,181.1 23,181.1" fill="#f4f4f4"/><rect x="34.0" y="168.6" width="747.5" height="1.1" fill="#7c7c7c"/><rect x="33.6" y="168.6" width="1.2" height="13.400000000000006" fill="#8a8a8a"/></svg>
<div class="rh" style="top:185.1px">112477</div>
<div class="rh" style="top:199.51999999999998px">112478</div>
<div class="rh" style="top:213.94px">112479</div>
<div class="rh" style="top:228.35999999999999px">112480</div>
<div class="rh" style="top:242.78px">112481</div>
<div class="rh" style="top:257.2px">112482</div>
<div class="rh" style="top:271.62px">112483</div>
<div class="rh" style="top:286.03999999999996px">112484</div>
<div class="rh" style="top:300.46px">112485</div>
<div class="rh" style="top:314.88px">112486</div>
<div class="rh" style="top:329.29999999999995px">112487</div>
<div class="rh" style="top:343.72px">112488</div>
<div class="rh" style="top:358.14px">112489</div>
<div class="rh" style="top:372.56px">112490</div>
<div class="rh" style="top:386.98px">112491</div>
<div class="rh" style="top:401.4px">112492</div>
<div class="rh" style="top:415.82px">112493</div>
<div class="ch" style="left:34.5px;width:181.0px;top:169.7px">A</div>
<div class="ch" style="left:215.5px;width:120.0px;top:169.7px">B</div>
<div class="ch" style="left:335.5px;width:41.5px;top:169.7px">C</div>
<div class="ch" style="left:377.0px;width:49.5px;top:169.7px">D</div>
<div class="ch" style="left:426.5px;width:50.0px;top:169.7px">E</div>
<div class="ch" style="left:476.5px;width:49.799999999999955px;top:169.7px">F</div>
<div class="ch" style="left:526.3px;width:49.700000000000045px;top:169.7px">G</div>
<div class="ch" style="left:576.0px;width:49.700000000000045px;top:169.7px">H</div>
<div class="ch" style="left:625.7px;width:49.69999999999993px;top:169.7px">I</div>
<div class="ch" style="left:675.4px;width:49.60000000000002px;top:169.7px">J</div>
<div class="ch" style="left:725.0px;width:49.700000000000045px;top:169.7px">K</div>
<div class="ch" style="left:774.7px;width:49.69999999999993px;top:169.7px">L</div>
</body></html>
